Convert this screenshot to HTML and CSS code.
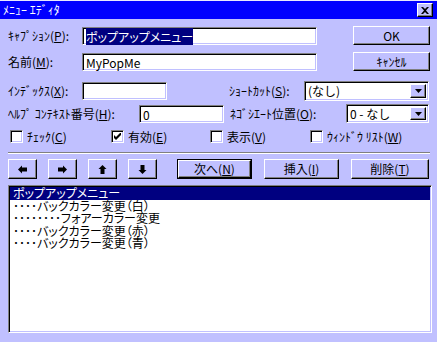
FILE: index.html
```html
<!DOCTYPE html>
<html lang="ja">
<head>
    <meta charset="UTF-8">
    <title>メニュー エディタ</title>
    <link rel="stylesheet" href="styles.css">
</head>
<body>
<div class="window">
    <div class="titlebar">
        <span class="title">ﾒﾆｭｰ ｴﾃﾞｨﾀ</span>
        <span class="close">
            <svg width="8" height="7" viewBox="0 0 8 7"><path d="M0 0h2l2 2 2-2h2L5 3.5 8 7H6L4 5 2 7H0l3-3.5z" fill="#000"/></svg>
        </span>
    </div>

    <div class="content">
        <div class="top">
            <div class="fields">
                <div class="row">
                    <span class="lbl lbl-main">ｷｬﾌﾟｼｮﾝ(<u>P</u>):</span>
                    <div class="edit edit-wide"><span class="sel">ポップアップメニュー</span></div>
                </div>
                <div class="row row-name">
                    <span class="lbl lbl-main">名前(<u>M</u>):</span>
                    <div class="edit edit-wide">MyPopMe</div>
                </div>
            </div>
            <div class="cmds">
                <div class="btn cmd">OK</div>
                <div class="btn cmd cmd-cancel">ｷｬﾝｾﾙ</div>
            </div>
        </div>

        <div class="row row-index">
            <span class="lbl lbl-main">ｲﾝﾃﾞｯｸｽ(<u>X</u>):</span>
            <div class="edit edit-small"></div>
            <span class="lbl lbl-shortcut">ｼｮｰﾄｶｯﾄ(<u>S</u>):</span>
            <div class="edit combo combo-shortcut">
                <span class="combo-text">(なし)</span>
                <span class="drop"><svg width="7" height="4" viewBox="0 0 7 4"><path d="M0 0h7L3.5 4z" fill="#000"/></svg></span>
            </div>
        </div>

        <div class="row row-help">
            <span class="lbl lbl-help">ﾍﾙﾌﾟ ｺﾝﾃｷｽﾄ番号(<u>H</u>):</span>
            <div class="edit edit-small">0</div>
            <span class="lbl lbl-nego">ﾈｺﾞｼｴｰﾄ位置(<u>O</u>):</span>
            <div class="edit combo combo-nego">
                <span class="combo-text">0 - なし</span>
                <span class="drop"><svg width="7" height="4" viewBox="0 0 7 4"><path d="M0 0h7L3.5 4z" fill="#000"/></svg></span>
            </div>
        </div>

        <div class="checks">
            <div class="check check-1"><span class="box"></span>ﾁｪｯｸ(<u>C</u>)</div>
            <div class="check check-2"><span class="box"><svg width="7" height="7" viewBox="0 0 7 7"><path d="M0 2l2 2 5-5v3L2 7 0 5z" fill="#000"/></svg></span>有効(<u>E</u>)</div>
            <div class="check check-3"><span class="box"></span>表示(<u>V</u>)</div>
            <div class="check"><span class="box"></span>ｳｨﾝﾄﾞｳ ﾘｽﾄ(<u>W</u>)</div>
        </div>

        <div class="separator"></div>

        <div class="toolbar">
            <div class="btn arrow"><svg width="9" height="9" viewBox="0 0 9 9"><path d="M0 4.5L4 0.5v2h5v4H4v2z" fill="#000"/></svg></div>
            <div class="btn arrow"><svg width="9" height="9" viewBox="0 0 9 9"><path d="M9 4.5L5 0.5v2H0v4h5v2z" fill="#000"/></svg></div>
            <div class="btn arrow"><svg width="9" height="9" viewBox="0 0 9 9"><path d="M4.5 0L8.5 4h-2v5h-4V4h-2z" fill="#000"/></svg></div>
            <div class="btn arrow"><svg width="9" height="9" viewBox="0 0 9 9"><path d="M4.5 9L8.5 5h-2V0h-4v5h-2z" fill="#000"/></svg></div>
            <div class="btn default-btn"><span>次へ(<u>N</u>)</span></div>
            <div class="btn action">挿入(<u>I</u>)</div>
            <div class="btn action action-del">削除(<u>T</u>)</div>
        </div>

        <div class="list">
            <div class="item selected">ポップアップメニュー</div>
            <div class="item">････バックカラー変更（白）</div>
            <div class="item">････････フォアーカラー変更</div>
            <div class="item">････バックカラー変更（赤）</div>
            <div class="item">････バックカラー変更（青）</div>
        </div>
    </div>
</div>
</body>
</html>
```

FILE: styles.css
```css
body {
    margin: 0;
    background: #c0c0ff;
    font-family: "Noto Sans CJK JP", sans-serif;
    font-size: 12px;
    color: #000;
}
.window {
    width: 437px;
    height: 342px;
    overflow: hidden;
    border-top: 1px solid #e8e8ff;
    box-sizing: border-box;
}
.titlebar {
    height: 18px;
    background: #0000ff;
    color: #fff;
    display: flex;
    align-items: center;
    justify-content: space-between;
    padding: 0 4px 0 3px;
    line-height: 12px;
}
.close {
    width: 14px;
    height: 12px;
    background: #c0c0ff;
    border: 1px solid;
    border-color: #fff #000 #000 #fff;
    box-shadow: inset -1px -1px #808080;
    display: flex;
    align-items: center;
    justify-content: center;
}
.content {
    padding: 8px 0 0 8px;
}
u {
    text-decoration: underline;
    text-underline-offset: 1px;
}

/* form rows */
.top {
    display: flex;
}
.fields {
    width: 309px;
}
.row {
    display: flex;
    align-items: center;
    height: 18px;
    line-height: 12px;
    white-space: nowrap;
}
.row-name {
    margin-top: 8px;
}
.row-index {
    margin-top: 10px;
    height: 20px;
}
.row-help {
    margin-top: 3px;
    height: 19px;
}
.lbl {
    flex: none;
}
.lbl-main {
    width: 74px;
}
.lbl-help {
    width: 131px;
}
.lbl-shortcut {
    width: 75px;
    margin-left: 62px;
}
.lbl-nego {
    width: 116px;
    margin-left: 6px;
}
.edit {
    box-sizing: border-box;
    height: 18px;
    background: #fff;
    border: 1px solid;
    border-color: #808080 #fff #fff #808080;
    box-shadow: inset 1px 1px #000, inset -1px -1px #c0c0ff;
    padding: 2px 3px 0;
    line-height: 13px;
    flex: none;
}
.edit-wide {
    width: 235px;
}
.edit-small {
    width: 85px;
}
.sel {
    background: #000080;
    color: #fff;
    font-feature-settings: "palt";
}
.combo {
    display: flex;
    justify-content: space-between;
    padding: 2px 2px 2px 3px;
}
.combo-shortcut {
    width: 125px;
    height: 20px;
}
.combo-nego {
    width: 83px;
    height: 19px;
}
.combo-text {
    line-height: 14px;
}
.drop {
    box-sizing: border-box;
    width: 16px;
    background: #c0c0ff;
    border: 1px solid;
    border-color: #fff #000 #000 #fff;
    box-shadow: inset -1px -1px #808080;
    display: flex;
    align-items: center;
    justify-content: center;
}

/* buttons */
.btn {
    box-sizing: border-box;
    background: #c0c0ff;
    border: 1px solid;
    border-color: #fff #000 #000 #fff;
    box-shadow: inset -1px -1px #808080;
    display: flex;
    align-items: center;
    justify-content: center;
    line-height: 12px;
    white-space: nowrap;
}
.cmds {
    margin-left: 36px;
    margin-top: -1px;
    width: 77px;
}
.cmd {
    height: 19px;
}
.cmd-cancel {
    margin-top: 7px;
}

/* check boxes */
.checks {
    display: flex;
    margin-top: 7px;
    padding-left: 2px;
    height: 13px;
    line-height: 12px;
    white-space: nowrap;
}
.check {
    display: flex;
    align-items: center;
}
.check-1 {
    width: 101px;
}
.check-2 {
    width: 99px;
}
.check-3 {
    width: 100px;
}
.box {
    box-sizing: border-box;
    width: 13px;
    height: 13px;
    background: #fff;
    border: 1px solid;
    border-color: #808080 #fff #fff #808080;
    box-shadow: inset 1px 1px #000, inset -1px -1px #c0c0ff;
    margin-right: 4px;
    display: flex;
    align-items: center;
    justify-content: center;
}
.separator {
    width: 422px;
    margin-top: 9px;
    border-top: 1px solid #808080;
    border-bottom: 1px solid #fff;
}

.toolbar {
    display: flex;
    margin-top: 5px;
    height: 20px;
}
.arrow {
    width: 29px;
    margin-right: 11px;
}
.default-btn {
    width: 75px;
    margin-left: 9px;
    border: 1px solid #000;
    box-shadow: none;
    padding: 0;
}
.default-btn span {
    box-sizing: border-box;
    width: 100%;
    height: 100%;
    border: 1px solid;
    border-color: #fff #000 #000 #fff;
    box-shadow: inset -1px -1px #808080;
    display: flex;
    align-items: center;
    justify-content: center;
}
.action {
    width: 75px;
    margin-left: 12px;
}
.action-del {
    width: 78px;
}

/* menu list */
.list {
    box-sizing: border-box;
    width: 424px;
    height: 148px;
    margin-top: 6px;
    background: #fff;
    border: 1px solid;
    border-color: #808080 #fff #fff #808080;
    box-shadow: inset 1px 1px #000, inset -1px -1px #c0c0ff;
    padding: 1px;
    font-feature-settings: "palt";
}
.item {
    height: 12.5px;
    line-height: 12.5px;
    padding-left: 3px;
    white-space: nowrap;
}
.selected {
    background: #000080;
    color: #fff;
}
```
